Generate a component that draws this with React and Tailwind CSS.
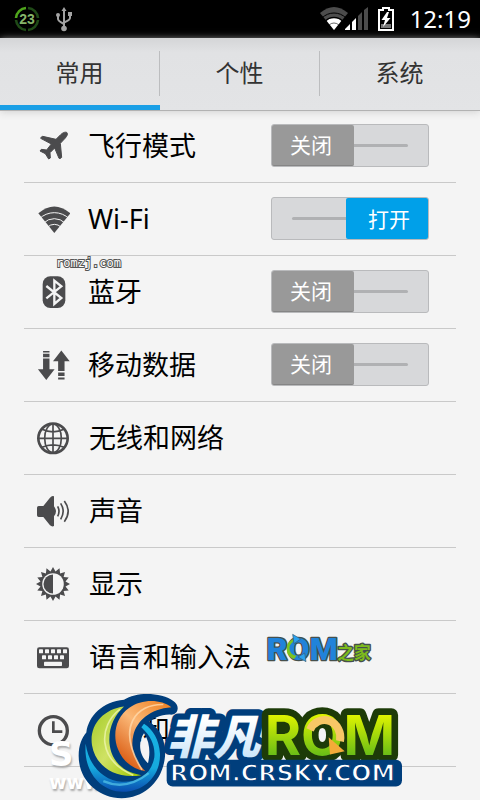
import { useState } from 'react';

const CJK = "font-['Noto_Sans','Noto_Sans_CJK_SC',sans-serif]";

// 16 pointed gear around the brightness disc
const sunPoints = Array.from({ length: 32 }, (_, i) => {
  const r = i % 2 === 0 ? 52 : 39;
  const a = (i * Math.PI) / 16;
  return `${99 + r * Math.sin(a)},${100 - r * Math.cos(a)}`;
}).join(' ');

const icons = {
  plane: {
    box: '48 41 102 102',
    art: (
      <path d="M141 52C136 48 127 53 122 58L108 72L68 63Q63 64 62 69L94 86L80 104L64 102L60 107L76 115L86 131L91 128L90 112L104 98L117 129Q122 131 125 126L121 84L136 68C141 62 144 56 141 52Z" stroke="#4b4b4d" strokeWidth="3" strokeLinejoin="round" />
    ),
  },
  wifi: {
    box: '48 260 102 102',
    art: (
      <>
        <path d="M103 353L55 294Q103 253 151 294Z" />
        <g fill="none" stroke="#f4f4f4" strokeWidth="3">
          <circle cx="103" cy="356" r="64" />
          <circle cx="103" cy="356" r="46" />
          <circle cx="103" cy="356" r="29" />
        </g>
      </>
    ),
  },
  bluetooth: {
    box: '48 74 102 102',
    art: (
      <>
        <rect x="68" y="78" width="68" height="95" rx="23" />
        <path d="M79 107L124 143L103 161V91L124 108L79 144" fill="none" stroke="#f4f4f4" strokeWidth="7" />
      </>
    ),
  },
  data: {
    box: '48 293 106 102',
    art: (
      <>
        <path d="M70 300H90V305H70ZM70 309H90V320H70ZM70 324H90V357H106L80 391L54 357H70Z" />
        <path d="M127 299L153 332H137V363H117V332H101ZM117 367H137V378H117ZM117 383H137V389H117Z" />
      </>
    ),
  },
  globe: {
    box: '48 62 102 102',
    art: (
      <g fill="none" stroke="#4b4b4d" strokeWidth="5">
        <circle cx="99" cy="114" r="44" strokeWidth="8" />
        <ellipse cx="99" cy="114" rx="25" ry="43" />
        <path d="M99 70V158M55 114H143M66 87Q99 102 132 87M66 141Q99 126 132 141" />
      </g>
    ),
  },
  sound: {
    box: '48 281 102 102',
    art: (
      <>
        <path d="M56 317H70L90 292Q96 285 102 288V318Q108 326 108 333Q108 341 102 348V377Q96 380 90 375L70 350H56Q51 350 51 345V322Q51 317 56 317Z" />
        <path d="M113 318Q121 333 113 348M122 309Q137 333 122 357M133 302Q156 333 133 364" fill="none" stroke="#4b4b4d" strokeWidth="5" />
      </>
    ),
  },
  sun: {
    box: '47 48 104 104',
    art: (
      <>
        <polygon points={sunPoints} />
        <circle cx="99" cy="100" r="33" fill="#f4f4f4" />
        <path d="M99 71A29 29 0 0 0 99 129Z" />
      </>
    ),
  },
  keyboard: {
    box: '48 269 102 102',
    art: (
      <>
        <rect x="51" y="291" width="96" height="63" rx="7" />
        <g fill="#f4f4f4">
          {[57, 75, 93, 111, 129].map((x) => (
            <rect key={x} x={x} y="297" width="12" height="12" rx="2" />
          ))}
          {[66, 84, 102, 120].map((x) => (
            <rect key={x} x={x} y="315" width="12" height="12" rx="2" />
          ))}
          <rect x="72" y="334" width="54" height="13" rx="2" />
        </g>
      </>
    ),
  },
  clock: {
    box: '48 98 102 102',
    art: (
      <>
        <circle cx="100" cy="151" r="42" fill="none" stroke="#4b4b4d" strokeWidth="10" />
        <path d="M100 123V154H127" fill="none" stroke="#4b4b4d" strokeWidth="8" />
      </>
    ),
  },
};

const switchRows = [
  { icon: 'plane', label: '飞行模式', on: false },
  { icon: 'wifi', label: 'Wi-Fi', on: true },
  { icon: 'bluetooth', label: '蓝牙', on: false },
  { icon: 'data', label: '移动数据', on: false },
];

const linkRows = [
  { icon: 'globe', label: '无线和网络' },
  { icon: 'sound', label: '声音' },
  { icon: 'sun', label: '显示' },
  { icon: 'keyboard', label: '语言和输入法' },
  { icon: 'clock', label: '日期和时间' },
];

const RowIcon = ({ name }) => (
  <svg viewBox={icons[name].box} className="ml-3 h-[34px] w-[34px] shrink-0" fill="#4b4b4d" aria-hidden="true">
    {icons[name].art}
  </svg>
);

const Toggle = ({ label, initial }) => {
  const [on, setOn] = useState(initial);
  return (
    <button
      type="button"
      role="switch"
      aria-checked={on}
      aria-label={label}
      onClick={() => setOn(!on)}
      className={`mr-[27px] ml-auto flex h-[43px] w-[158px] shrink-0 items-center rounded-[3px] border border-[#b9babc] bg-[#d7d8da] text-[21px] text-white ${on ? 'flex-row-reverse' : ''}`}
    >
      <span
        className={`flex h-[41px] w-[82px] items-center justify-center rounded-[2px] pt-[2px] ${on ? 'bg-[#00a0e9] pl-1' : 'border-b border-[#858585] bg-[#999] pr-1'}`}
      >
        {on ? '打开' : '关闭'}
      </span>
      <span className={`h-[3px] w-[54px] bg-[#b0b1b3] ${on ? 'rounded-l-sm' : 'rounded-r-sm'}`} />
    </button>
  );
};

const StatusBar = () => (
  <div className="flex h-[38px] items-center bg-black text-white">
    <svg viewBox="0 0 26 26" className="ml-[14px] h-[26px] w-[26px]" aria-hidden="true">
      <g fill="none" strokeWidth="2.6">
        <path d="M2 12A11 11 0 0 1 12 2" stroke="#4fa51c" />
        <path d="M14 2A11 11 0 0 1 24 12M24 14A11 11 0 0 1 14 24M12 24A11 11 0 0 1 2 14" stroke="#1f4a17" />
      </g>
      <text x="13" y="18" textAnchor="middle" fontFamily="Liberation Sans" fontWeight="700" fontSize="14" fill="#86b56a">23</text>
    </svg>
    <svg viewBox="0 0 18 26" className="ml-[15px] h-[26px] w-[18px]" fill="#a3a3a3" stroke="#a3a3a3" aria-hidden="true">
      <path d="M9 4V22M3 9V13Q3 15 9 18M15 8V12Q15 14 9 16.500" fill="none" strokeWidth="2" />
      <path d="M9 1L11.500 5H6.500Z" stroke="none" />
      <circle cx="9" cy="22.500" r="2.800" stroke="none" />
      <circle cx="3" cy="9" r="2" stroke="none" />
      <path d="M13 6H17V10H13Z" stroke="none" />
    </svg>
    <svg viewBox="0 0 50 24" className="ml-auto h-6 w-[50px]" aria-hidden="true">
      <path d="M14 23L0 6Q14 -6 28 6Z" fill="#4c4c4c" />
      <path d="M14 23L6 13Q14 8 22 13Z" fill="#fff" />
      <g fill="none" stroke="#000" strokeWidth="1">
        <circle cx="14" cy="23" r="17" />
        <circle cx="14" cy="23" r="12.500" strokeWidth="1.500" />
        <circle cx="14" cy="23" r="7" strokeWidth=".6" />
      </g>
      <path d="M25 23V22L30 17V23ZM32 23V15L36 11V23Z" fill="#fff" />
      <path d="M38 23V9L42 5V23ZM44 23V3L48 0V23Z" fill="#4c4c4c" />
    </svg>
    <svg viewBox="0 0 16 24" className="ml-2 h-6 w-4" aria-hidden="true">
      <path d="M1 3H5V1H11V3H15V23H1Z" fill="none" stroke="#fff" strokeWidth="2" />
      <path d="M3 17H13V21H3Z" fill="#777" />
      <path d="M9 5L3.500 13H7L5 20L12.500 11H9L11 5Z" fill="#fff" />
    </svg>
    <time className="mr-[9px] ml-4 font-['Noto_Sans',sans-serif] text-2xl">12:19</time>
  </div>
);

const RomHomeLogo = () => (
  <svg viewBox="42 91 354 120" className="pointer-events-none absolute top-[630px] left-[264px] h-10 w-[118px]">
    <g stroke="#46504c" strokeWidth="8" strokeLinejoin="round" paintOrder="stroke">
      <text x="50" y="181" fontFamily="Roboto" fontWeight="900" fontSize="96" fill="#2183da">ROM</text>
      <text x="262" y="177" fontFamily="Noto Sans CJK SC" fontWeight="700" fontSize="50" fill="#7dbb1c">之家</text>
    </g>
    <path d="M130 118A32 32 0 0 0 132 178L140 168A22 22 0 0 1 128 128Z" fill="#7cc41f" />
    <path d="M128 104L152 118L132 132ZM168 186L144 172L164 160Z" fill="#2aa2ef" stroke="#3b5a70" strokeWidth="2" />
  </svg>
);

const CrskyLogo = () => (
  <svg viewBox="174 40 984 320" className="pointer-events-none absolute top-[693px] left-[78px] h-[107px] w-[328px]">
    <defs>
      <linearGradient id="lime" x1="0" y1="0" x2="1" y2="1">
        <stop offset="0" stopColor="#a3cb25" />
        <stop offset=".5" stopColor="#cfe264" />
        <stop offset="1" stopColor="#9cc400" />
      </linearGradient>
      <linearGradient id="orange" x1="1" y1="0" x2=".3" y2="1">
        <stop offset="0" stopColor="#ee7d1c" />
        <stop offset=".5" stopColor="#fbb877" />
        <stop offset="1" stopColor="#d95b12" />
      </linearGradient>
      <linearGradient id="ring" x1="0" y1="0" x2="0" y2="1">
        <stop offset="0" stopColor="#18b3e4" />
        <stop offset=".65" stopColor="#16a9dd" />
        <stop offset="1" stopColor="#0a4db0" />
      </linearGradient>
      <linearGradient id="ice" x1="0" y1="0" x2="0" y2="1">
        <stop offset=".3" stopColor="#fff" />
        <stop offset="1" stopColor="#bfe0f8" />
      </linearGradient>
      <linearGradient id="rom" x1="0" y1="0" x2="0" y2="1">
        <stop offset=".2" stopColor="#e0f400" />
        <stop offset=".9" stopColor="#57b51a" />
      </linearGradient>
    </defs>

    {/* emblem */}
    <path
      fill="#003e7c"
      fillRule="evenodd"
      d="M312 60C340 42 385 38 425 48C455 56 474 70 473 86C472 100 462 106 448 104C420 106 400 114 388 126C425 150 438 190 435 230C428 305 372 355 305 355C235 355 176 302 176 228C176 195 186 174 199 158C206 108 248 66 312 60ZM372 160C354 185 356 225 384 250C390 225 392 190 372 160Z"
    />
    <path
      fill="url(#ring)"
      d="M197 192C190 275 240 334 308 336C374 336 422 286 420 222C418 180 398 148 372 132L364 142C394 170 406 198 403 232C394 286 352 308 306 306C248 302 206 256 197 192Z"
    />
    <path fill="url(#lime)" d="M312 80C248 88 207 138 216 196C226 256 282 300 364 286C300 276 268 232 268 180C268 136 286 104 312 80Z" />
    <path d="M300 88C234 140 232 240 340 286" fill="none" stroke="#eef5ae" strokeWidth="5" opacity=".8" />
    <path
      fill="url(#orange)"
      d="M454 82C424 58 366 56 328 84C288 112 276 164 294 208C308 244 338 268 376 274C346 246 330 206 340 166C350 124 390 86 454 82Z"
    />
    <path d="M430 74C350 72 286 140 366 270" fill="none" stroke="#ffd9ab" strokeWidth="5" opacity=".8" />
    <path d="M250 304Q318 334 386 280" fill="none" stroke="#62d5f0" strokeWidth="7" opacity=".6" />

    <g strokeLinejoin="round" paintOrder="stroke">
      <g fontFamily="Noto Sans CJK SC" fontWeight="900" fontStyle="italic" fontSize="140" fill="url(#ice)" stroke="#003e7c" strokeWidth="38">
        <text x="440" y="222">非凡</text>
      </g>
      <g fontFamily="Inter" fontWeight="700" fontSize="166" fill="url(#rom)" stroke="#1d3b08" strokeWidth="40">
        <text x="734" y="226">ROM</text>
      </g>
    </g>
    {/* arrow wrapped round the O */}
    <path d="M870 150A48 52 0 0 1 960 184" fill="none" stroke="#f7c766" strokeWidth="24" />
    <path d="M926 172L974 214L930 224Z" fill="#f3ab38" />

    <rect x="440" y="240" width="706" height="80" rx="18" fill="#003e7c" />
    <text x="450" y="304" fontFamily="DejaVu Sans" fontWeight="700" fontSize="71" fill="#fff" stroke="#003e7c" strokeWidth="4">
      ROM.CRSKY.COM
    </text>
  </svg>
);

const App = () => {
  const [tab, setTab] = useState('常用');

  return (
    <div className={`relative min-h-screen overflow-hidden bg-[#f4f4f4] text-black ${CJK}`}>
      <StatusBar />
      <nav className="flex h-[72px] bg-linear-to-b from-[#d4d5d7] via-[#e1e2e4] via-20% to-[#e3e4e6] shadow-[0_1px_0_#b2b2b2,0_2px_8px_#d0d0d0]">
        {['常用', '个性', '系统'].map((name) => (
          <button
            key={name}
            type="button"
            onClick={() => setTab(name)}
            className={`group flex flex-1 items-center border-b-[5px] pt-1 text-2xl text-[#333] ${tab === name ? 'border-[#1a9fe6]' : 'border-transparent'}`}
          >
            <span className="flex h-[45px] flex-1 items-center justify-center border-r border-[#bcbdbf] pb-[2px] group-last:border-transparent">{name}</span>
          </button>
        ))}
      </nav>

      <ul className="mx-6 text-[27px]">
        {switchRows.map((row) => (
          <li key={row.label} className="flex h-[73px] items-center border-b border-[#c9c9c9] pb-px">
            <RowIcon name={row.icon} />
            <span className="ml-[18px] pt-[2px]">{row.label}</span>
            <Toggle label={row.label} initial={row.on} />
          </li>
        ))}
        {linkRows.map((row) => (
          <li key={row.label} className="border-b border-[#c9c9c9]">
            <a href="#" className="flex h-[72px] items-center pb-px">
              <RowIcon name={row.icon} />
              <span className="ml-[19px] pt-[2px]">{row.label}</span>
            </a>
          </li>
        ))}
      </ul>

      {/* watermarks */}
      <svg viewBox="0 0 72 18" className="pointer-events-none absolute top-[255px] left-[54px] h-[18px] w-[72px]">
        <text x="2" y="12" fontFamily="DejaVu Sans Mono" fontSize="12" fill="#fff" stroke="#555" strokeWidth="2" paintOrder="stroke">romzj.com</text>
      </svg>
      <div className="pointer-events-none absolute top-[738px] left-[49px] font-['DejaVu_Sans',sans-serif] font-bold text-white [text-shadow:1px_2px_2px_#aaa]">
        <p className="text-[34px] leading-8">S</p>
        <p className="text-[19px] leading-6">www.</p>
      </div>
      <RomHomeLogo />
      <CrskyLogo />
    </div>
  );
};

export default App;
